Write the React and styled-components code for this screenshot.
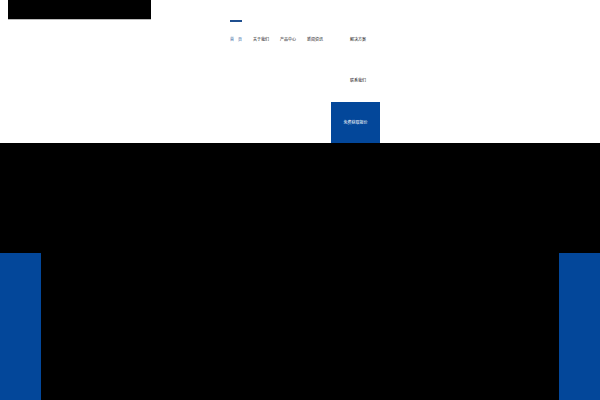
import React from "react";
import styled, { createGlobalStyle } from "styled-components";

const Global = createGlobalStyle`
  html, body {
    margin: 0;
    padding: 0;
    background: #000;
  }
  body {
    font-family: "Noto Sans CJK SC", "Noto Sans", sans-serif;
    overflow: hidden;
  }
`;

const Page = styled.div`
  width: 600px;
  height: 400px;
  overflow: hidden;
  background: #000;
`;

const Header = styled.header`
  display: flex;
  align-items: flex-start;
  background: #fff;
  height: 143px;
`;

const Logo = styled.div`
  width: 143px;
  height: 19px;
  margin-left: 8px;
  background: #000;
  border-bottom: 1px solid #bbb;
`;

const Menu = styled.div`
  display: flex;
  flex-direction: column;
  align-items: flex-end;
  width: 151px;
  margin-left: 78px;
  margin-top: 20px;
`;

const Links = styled.nav`
  display: flex;
  flex-wrap: wrap;
  justify-content: flex-end;
  width: 148px;
  padding-right: 3px;
`;

const NavItem = styled.a`
  display: block;
  box-sizing: border-box;
  height: 41px;
  padding-right: 11px;
  margin-left: ${p => (p.$spaced ? "16px" : "0")};
  font-size: 4px;
  line-height: 39px;
  color: ${p => (p.$active ? "#2b5c9e" : "#111")};
  white-space: nowrap;
  position: relative;
  &::before {
    content: "";
    position: absolute;
    top: 0;
    left: 0;
    right: 11px;
    height: 2px;
    background: ${p => (p.$active ? "#1f4f8f" : "transparent")};
  }
`;

const QuoteButton = styled.a`
  display: block;
  width: 49px;
  height: 41px;
  background: #03479a;
  color: #fff;
  font-size: 4px;
  line-height: 41px;
  text-align: center;
  white-space: nowrap;
`;

const Hero = styled.section`
  position: relative;
  height: 257px;
  background: #000;
`;

const Arrow = styled.button`
  position: absolute;
  top: 110px;
  ${p => (p.$side === "left" ? "left: 0;" : "right: 0;")}
  width: 41px;
  height: 160px;
  border: 0;
  padding: 0;
  background: #03479a;
`;

const links = [
  { label: "首　页", active: true },
  { label: "关于我们" },
  { label: "产品中心" },
  { label: "新闻资讯" },
  { label: "解决方案", spaced: true },
  { label: "联系我们" },
];

export default function App() {
  return (
    <Page>
      <Global />
      <Header>
        <Logo />
        <Menu>
          <Links>
            {links.map(l => (
              <NavItem key={l.label} $active={l.active} $spaced={l.spaced}>
                {l.label}
              </NavItem>
            ))}
          </Links>
          <QuoteButton>免费获取报价</QuoteButton>
        </Menu>
      </Header>
      <Hero>
        <Arrow $side="left" aria-label="上一张" />
        <Arrow $side="right" aria-label="下一张" />
      </Hero>
    </Page>
  );
}
